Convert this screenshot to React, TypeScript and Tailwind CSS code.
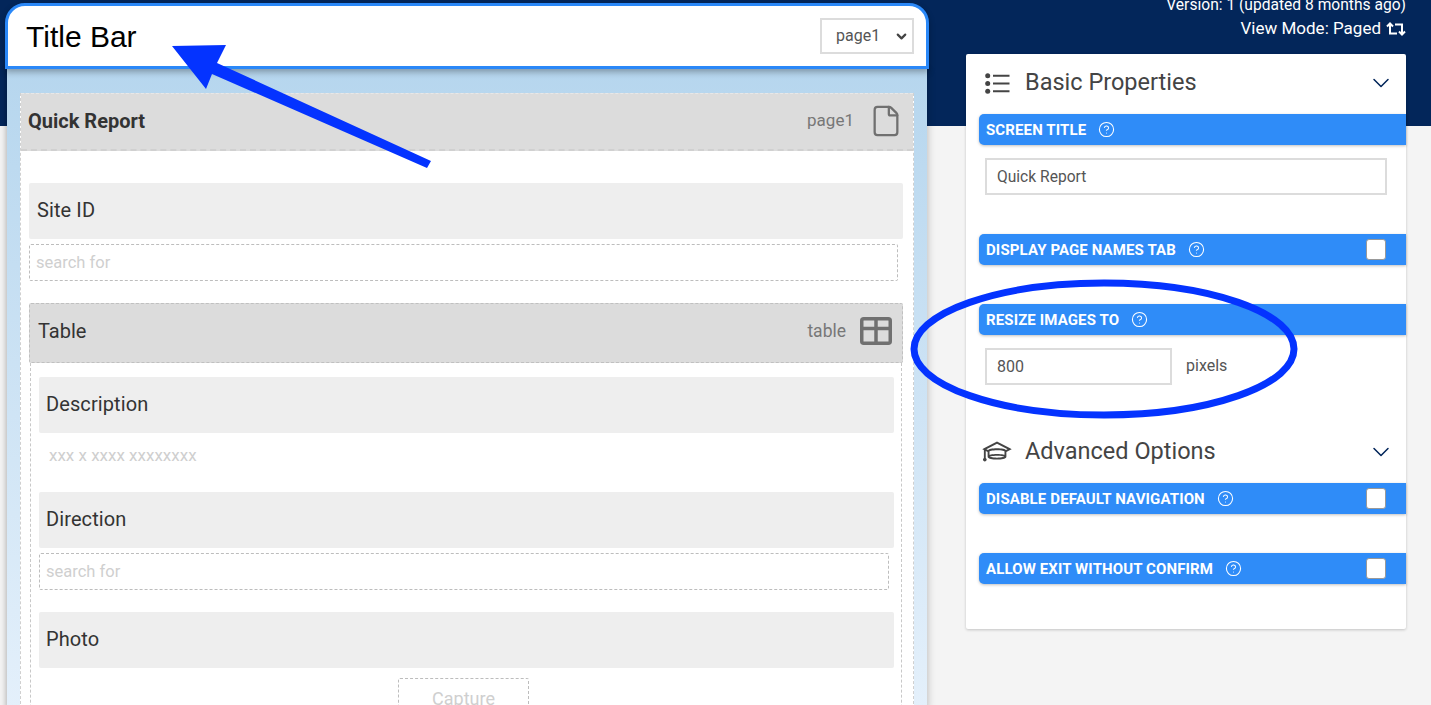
import React from "react";
import { ChevronDown, CircleHelp, File } from "lucide-react";
import { LiaGraduationCapSolid } from "react-icons/lia";

function Bar({ label, check, mt }: { label: string; check?: boolean; mt: string }) {
  return (
    <div className={`${mt} ml-[13px] flex h-[31px] items-center justify-between rounded-l-[5px] bg-[#2f8cf8] pl-[7px] pr-[20px] shadow-[0_1px_3px_rgba(0,0,0,0.25)]`}>
      <div className="flex items-center gap-[12px]">
        <span className="pt-[1px] text-[15px] font-bold tracking-[0.12px] text-white">{label}</span>
        <CircleHelp size={17} strokeWidth={1.5} className="text-white" />
      </div>
      {check && <div className="h-[21px] w-[20px] rounded-[3px] border border-[#999] bg-white" />}
    </div>
  );
}

function FieldHead({ label, mt, pl }: { label: string; mt: string; pl: string }) {
  return (
    <div className={`${mt} ${pl} flex h-[56px] items-center rounded-[2px] bg-[#eeeeee] pb-[2px] text-[20px] tracking-[0.1px] text-[#333]`}>{label}</div>
  );
}

function SearchBox({ w }: { w: string }) {
  return (
    <div className={`${w} mt-[5px] flex h-[37px] items-center rounded-[2px] border border-dashed border-[#bdbdbd] pl-[6px] pt-[1px] text-[16.5px] text-[#cfcfcf]`}>search for</div>
  );
}

export default function App() {
  return (
    <div className="relative h-[705px] w-[1431px] overflow-hidden bg-[linear-gradient(#03265a_126px,#f4f4f4_126px)] font-['Roboto',sans-serif]">
      <div className="flex items-start">
        <div className="ml-[5px] mt-[3px] w-[924px]">
          <div className="relative z-10 flex h-[66px] items-center justify-between rounded-t-[20px] border-[3px] border-[#2a88f8] bg-white pl-[18px] pr-[12px] shadow-[0_3px_6px_rgba(0,0,0,0.3)]">
            <span className="font-['Liberation_Sans',sans-serif] text-[30px] text-black">Title Bar</span>
            <div className="flex h-[36px] w-[94px] items-center justify-between border-2 border-[#dcdcdc] pl-[14px] pr-[3px] text-[16px] text-[#555]">
              <span>page1</span>
              <ChevronDown size={15} strokeWidth={3.5} className="text-[#444]" />
            </div>
          </div>
          <div className="mx-[2px] h-[640px] bg-[linear-gradient(#b6d6ee,#e4f0fb)] pl-[13px] pr-[13px] pt-[24px] shadow-[-2px_0_5px_rgba(0,0,0,0.2),3px_0_6px_rgba(0,0,0,0.12)]">
            <div className="h-full border-x border-dashed border-[#d0d0d0] bg-white">
              <div className="flex h-[58px] items-center justify-between border-b-2 border-t border-dashed border-b-[#d0d0d0] border-t-[#e8e8e8] bg-[#dcdcdc] pb-[2px] pl-[7px] pr-[10px]">
                <span className="text-[20px] font-bold text-[#333]">Quick Report</span>
                <div className="flex items-center gap-[15px]">
                  <span className="text-[17px] text-[#777]">page1</span>
                  <File size={34} strokeWidth={1.6} className="text-[#707070]" />
                </div>
              </div>
              <div className="pl-[8px] pr-[10px] pt-[32px]">
                <FieldHead label="Site ID" mt="" pl="pl-[8px]" />
                <SearchBox w="w-[869px]" />
                <div className="mt-[22px] flex h-[60px] items-center justify-between rounded-[2px] border border-dashed border-[#c0c0c0] bg-[#dcdcdc] pb-[4px] pl-[8px] pr-[10px]">
                  <span className="text-[20px] text-[#333]">Table</span>
                  <div className="flex items-center gap-[14px]">
                    <span className="text-[17.5px] text-[#777]">table</span>
                    <svg width="32" height="28" viewBox="0 0 32 28" fill="none" stroke="#707070" strokeWidth="3.5">
                      <rect x="1.75" y="1.75" width="28.5" height="24.5" rx="2" />
                      <path d="M1.5 11.5H30.5M16 1.5V26.5" />
                    </svg>
                  </div>
                </div>
                <div className="mx-[1px] h-[400px] border-x border-dashed border-[#c8c8c8] pl-[8px] pr-[7px] pt-[14px]">
                  <FieldHead label="Description" mt="" pl="pl-[7px]" />
                  <div className="flex h-[59px] items-center pb-[14px] pl-[10px] text-[17px] text-[#cfcfcf]">xxx x xxxx xxxxxxxx</div>
                  <FieldHead label="Direction" mt="" pl="pl-[7px]" />
                  <SearchBox w="w-[850px]" />
                  <FieldHead label="Photo" mt="mt-[22px]" pl="pl-[7px]" />
                  <div className="ml-[359px] mt-[10px] flex h-[40px] w-[131px] justify-center rounded-[2px] border border-dashed border-[#bdbdbd] pt-[6px] text-[18px] text-[#cfcfcf]">Capture</div>
                </div>
              </div>
            </div>
          </div>
        </div>

        <div className="ml-[37px] w-[440px]">
          <div className="-mt-[6px] h-[60px] text-right leading-[23px] text-white">
            <div className="text-[15.6px]">Version: 1 (updated 8 months ago)</div>
            <div className="flex items-center justify-end gap-[5px] text-[17px]">
              View Mode: Paged
              <svg width="20" height="14" viewBox="0 0 20 14" fill="none" stroke="white" strokeWidth="2">
                <path d="M1 4.5L4 1.5L7 4.5M4 2V11.5H11M19 9.5L16 12.5L13 9.5M16 12V2.5H9" />
              </svg>
            </div>
          </div>
          <div className="h-[575px] rounded-[2px] bg-white shadow-[0_1px_3px_rgba(0,0,0,0.2)]">
            <div className="flex h-[60px] items-center justify-between pb-[2px] pl-[19px] pr-[11px]">
              <div className="flex items-center gap-[15px] text-[23.5px] text-[#444]">
                <svg width="25" height="21" viewBox="0 0 25 21" fill="#444">
                  <circle cx="2.7" cy="2.7" r="2.5" />
                  <circle cx="2.7" cy="10.5" r="2.5" />
                  <circle cx="2.7" cy="18.3" r="2.5" />
                  <path d="M8 1.7H24.5V3.7H8ZM8 9.5H24.5V11.5H8ZM8 17.3H24.5V19.3H8Z" />
                </svg>
                Basic Properties
              </div>
              <ChevronDown size={28} strokeWidth={1.3} className="text-[#03265a]" />
            </div>
            <Bar label="SCREEN TITLE" mt="" />
            <input readOnly value="Quick Report" className="ml-[19px] mt-[13px] block h-[37px] w-[402px] border-2 border-[#dcdcdc] pl-[10px] text-[15.6px] text-[#555] outline-none" />
            <Bar label="DISPLAY PAGE NAMES TAB" check mt="mt-[39px]" />
            <Bar label="RESIZE IMAGES TO" mt="mt-[39px]" />
            <div className="ml-[19px] mt-[13px] flex items-center gap-[14px]">
              <input readOnly value="800" className="block h-[37px] w-[187px] border-2 border-[#dcdcdc] pl-[10px] text-[16px] text-[#555] outline-none" />
              <span className="pb-[2px] text-[16px] text-[#555]">pixels</span>
            </div>
            <div className="mt-[32px] flex h-[68px] items-center justify-between pl-[16px] pr-[11px] pt-[2px]">
              <div className="flex items-center gap-[13px] text-[23.5px] text-[#444]">
                <LiaGraduationCapSolid size={30} className="text-[#444]" />
                Advanced Options
              </div>
              <ChevronDown size={28} strokeWidth={1.3} className="text-[#03265a]" />
            </div>
            <Bar label="DISABLE DEFAULT NAVIGATION" check mt="-mt-[2px]" />
            <Bar label="ALLOW EXIT WITHOUT CONFIRM" check mt="mt-[39px]" />
          </div>
        </div>
      </div>

      <svg className="pointer-events-none absolute left-0 top-0 z-20" width="1431" height="705" viewBox="0 0 1431 705" fill="none">
        <polygon points="172,46 226,45 217,63 431,161 427,168 212,74 206,89" fill="#0433ff" />
        <ellipse cx="1104" cy="349" rx="190" ry="66" stroke="#0433ff" strokeWidth="7" />
      </svg>
    </div>
  );
}
